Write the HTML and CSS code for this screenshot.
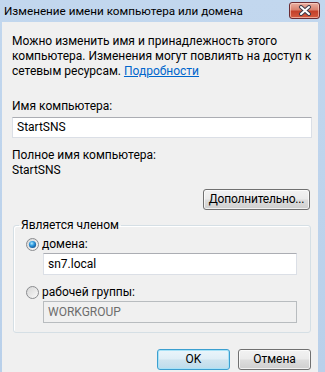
FILE: index.html
```html
<!DOCTYPE html>
<html lang="ru">
  <head>
    <meta charset="UTF-8" />
    <title>Изменение имени компьютера или домена</title>
    <link rel="stylesheet" href="styles.css">
  </head>

  <body>
    <div class="window">
      <div class="titlebar">
        <span class="title">Изменение имени компьютера или домена</span>
        <div class="close-btn">
          <svg width="14" height="11" viewBox="0 0 14 11">
            <path d="M3 2 L11 9 M11 2 L3 9" stroke="#3b3b4a" stroke-width="4" stroke-linecap="round" />
            <path d="M3 2 L11 9 M11 2 L3 9" stroke="#fff" stroke-width="2" stroke-linecap="round" />
          </svg>
        </div>
      </div>

      <div class="client">
        <p class="intro">
          Можно изменить имя и принадлежность этого<br />
          компьютера. Изменения могут повлиять на доступ к<br />
          сетевым ресурсам. <a href="#" class="link">Подробности</a>
        </p>

        <div class="label">Имя компьютера:</div>
        <div class="textbox">StartSNS</div>

        <div class="label full-label">Полное имя компьютера:</div>
        <div class="value">StartSNS</div>

        <div class="more-row">
          <button class="btn btn-more">Дополнительно...</button>
        </div>

        <fieldset class="group">
          <legend>Является членом</legend>
          <div class="radio-row">
            <svg class="radio" width="13" height="13" viewBox="0 0 13 13">
              <defs>
                <linearGradient id="rbg" x1="0" y1="0" x2="1" y2="1">
                  <stop offset="0" stop-color="#d4d4d4" />
                  <stop offset="1" stop-color="#fbfbfb" />
                </linearGradient>
                <radialGradient id="dot" cx="0.4" cy="0.35" r="0.7">
                  <stop offset="0" stop-color="#b5ecfd" />
                  <stop offset="0.45" stop-color="#2f9be0" />
                  <stop offset="1" stop-color="#10508f" />
                </radialGradient>
              </defs>
              <circle cx="6.5" cy="6.5" r="6" fill="url(#rbg)" stroke="#8a8c8f" />
              <circle cx="6.5" cy="6.5" r="3.6" fill="url(#dot)" />
            </svg>
            <span>домена:</span>
          </div>
          <div class="textbox inner">sn7.local</div>

          <div class="radio-row second">
            <svg class="radio" width="13" height="13" viewBox="0 0 13 13">
              <circle cx="6.5" cy="6.5" r="6" fill="url(#rbg)" stroke="#8a8c8f" />
            </svg>
            <span>рабочей группы:</span>
          </div>
          <div class="textbox inner disabled">WORKGROUP</div>
        </fieldset>

        <div class="actions">
          <button class="btn btn-default">OK</button>
          <button class="btn">Отмена</button>
        </div>
      </div>
    </div>
  </body>
</html>
```

FILE: styles.css
```css
* {
  margin: 0;
  padding: 0;
  box-sizing: border-box;
}

body {
  font-family: Roboto, "Liberation Sans", sans-serif;
  font-size: 12px;
  color: #000;
  background-color: #bfd4ec;
}

.window {
  width: 325px;
  height: 372px;
  overflow: hidden;
  display: flex;
  flex-direction: column;
  background: linear-gradient(#c2d7ee, #b9d0ea);
}

.titlebar {
  height: 22px;
  flex: none;
  display: flex;
  align-items: center;
  justify-content: space-between;
  padding: 0 5px 0 4px;
}

.title {
  font-size: 11.7px;
  line-height: 15px;
  color: #000;
  white-space: nowrap;
}

.close-btn {
  width: 31px;
  height: 17px;
  border: 1px solid #6b2c33;
  border-radius: 3px;
  background: linear-gradient(#eab0a2 0%, #d9826f 45%, #c4402a 55%, #d45a3f 100%);
  box-shadow: inset 0 0 0 1px rgba(255, 220, 210, 0.6);
  display: flex;
  align-items: center;
  justify-content: center;
  margin-top: -2px;
}

.client {
  flex: 1;
  margin: 0 7px 0 2px;
  background-color: #f0f0f0;
  padding: 12px 6px 0 10px;
  line-height: 15px;
}

.intro {
  line-height: 15px;
  white-space: nowrap;
}

.link {
  color: #0066cc;
  text-decoration: underline;
}

.label {
  margin-top: 20px;
}

.textbox {
  height: 21px;
  margin-top: 3px;
  padding: 0 4px;
  line-height: 19px;
  background-color: #fff;
  border: 1px solid #dbdfe6;
  border-top-color: #abadb3;
}

.full-label {
  margin-top: 10px;
}

.more-row {
  display: flex;
  justify-content: flex-end;
  padding-right: 2px;
  margin-top: 11px;
}

.btn {
  font-family: inherit;
  font-size: 12px;
  line-height: 15px;
  color: #000;
  height: 21px;
  border: 1px solid #707070;
  border-radius: 3px;
  background: linear-gradient(#f2f2f2 0%, #ebebeb 48%, #dddddd 52%, #cfcfcf 100%);
  box-shadow: inset 0 0 0 1px rgba(255, 255, 255, 0.7);
}

.btn-more {
  width: 107px;
  letter-spacing: -0.2px;
}

.group {
  margin: 8px 1px 0 1px;
  padding: 4px 13px 9px 12px;
  border: 1px solid #d5dfe5;
  border-radius: 3px;
  box-shadow: inset 1px 1px 0 #fff;
}

.group legend {
  padding: 0 2px;
  margin-left: -7px;
  line-height: 15px;
}

.radio-row {
  display: flex;
  align-items: center;
  height: 15px;
}

.radio {
  margin-right: 3px;
  flex: none;
}

.second {
  margin-top: 10px;
}

.inner {
  height: 22px;
  margin-top: 1px;
  margin-left: 17px;
  line-height: 20px;
}

.disabled {
  background-color: #f0f0f0;
  border-color: #b8bcbf;
  color: #6d6d6d;
}

.actions {
  display: flex;
  justify-content: flex-end;
  gap: 8px;
  margin-top: 16px;
  padding-right: 1px;
}

.actions .btn {
  width: 73px;
}

.btn-default {
  border-color: #3c9fd0;
  background: linear-gradient(#eaf5fb 0%, #dfeef6 48%, #cfe4ef 52%, #bcdcec 100%);
  box-shadow: inset 0 0 0 1px #a8e2f7;
}
```
